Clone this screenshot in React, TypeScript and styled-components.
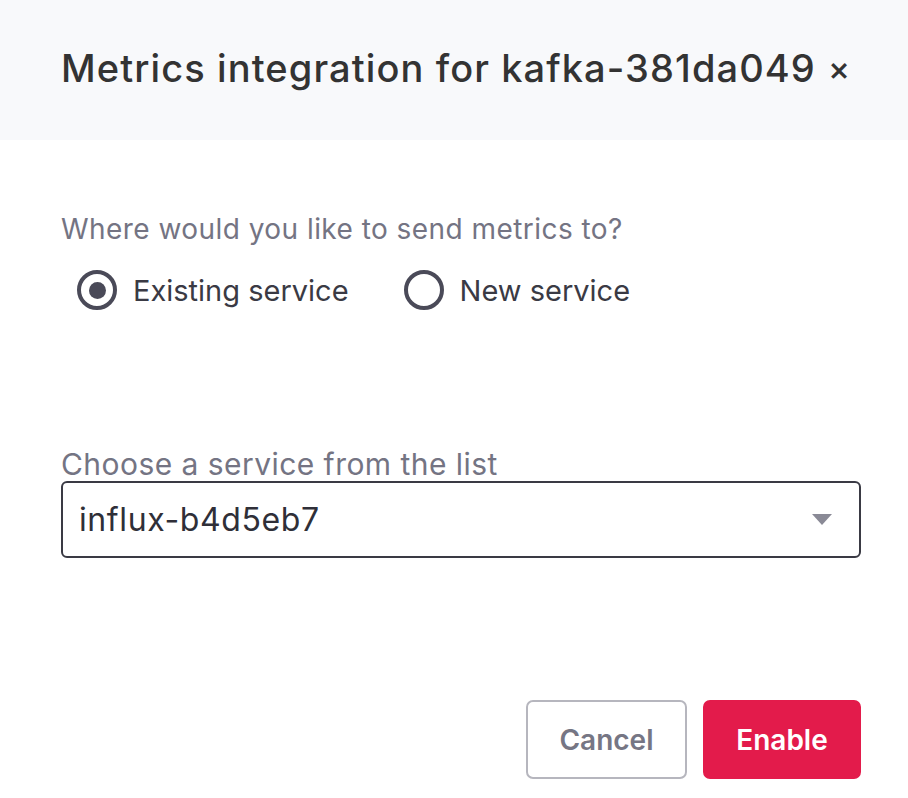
import React from 'react';
import styled, { createGlobalStyle } from 'styled-components';

const GlobalStyle = createGlobalStyle`
  html, body {
    margin: 0;
    padding: 0;
    background: #ffffff;
  }
  body {
    font-family: Inter, "Noto Sans", sans-serif;
    -webkit-font-smoothing: antialiased;
  }
`;

const Modal = styled.div`
  width: 908px;
  height: 798px;
  display: flex;
  flex-direction: column;
  background: #fff;
`;

const Header = styled.div`
  height: 140px;
  flex-shrink: 0;
  background: #f8f9fb;
  display: flex;
  align-items: center;
  padding: 0 0 4px 61px;
  box-sizing: border-box;
`;

const Title = styled.h1`
  margin: 0;
  font-size: 38px;
  font-weight: 500;
  color: #333333;
  letter-spacing: 1.1px;
  white-space: nowrap;
`;

const Close = styled.button`
  border: none;
  background: none;
  padding: 0;
  margin-left: 12px;
  color: #333;
  font-size: 33px;
  font-weight: 500;
  line-height: 1;
  cursor: pointer;
  font-family: inherit;
`;

const Body = styled.div`
  flex: 1;
  display: flex;
  flex-direction: column;
  padding: 72px 47px 19px 61px;
`;

const FieldLabel = styled.div<{ $size?: number }>`
  font-size: ${p => p.$size ?? 28}px;
  letter-spacing: 0.45px;
  color: #747483;
  line-height: 34px;
`;

const RadioRow = styled.div`
  display: flex;
  gap: 55px;
  margin-top: 24px;
  padding-left: 16px;
`;

const RadioOption = styled.label`
  display: flex;
  align-items: center;
  gap: 16px;
  height: 40px;
  font-size: 29px;
  color: #3a3a44;
  cursor: pointer;
`;

const RadioCircle = styled.span<{ $checked: boolean }>`
  width: 40px;
  height: 40px;
  box-sizing: border-box;
  border: 4px solid #4a4a58;
  border-radius: 50%;
  display: flex;
  align-items: center;
  justify-content: center;
  &::after {
    content: '';
    width: 17px;
    height: 17px;
    border-radius: 50%;
    background: #4a4a58;
    display: ${p => (p.$checked ? 'block' : 'none')};
  }
`;

const SelectBlock = styled.div`
  margin-top: 137px;
`;

const SelectBox = styled.div`
  height: 77px;
  box-sizing: border-box;
  border: 2px solid #3a3a44;
  border-radius: 6px;
  display: flex;
  align-items: center;
  justify-content: space-between;
  padding: 0 27px 0 16px;
  font-size: 32px;
  letter-spacing: 0.6px;
  color: #2f2f38;
`;

const Caret = styled.span`
  width: 0;
  height: 0;
  border-left: 10px solid transparent;
  border-right: 10px solid transparent;
  border-top: 11px solid #8a8a96;
`;

const Footer = styled.div`
  margin-top: auto;
  display: flex;
  justify-content: flex-end;
  gap: 16px;
`;

const Button = styled.button<{ $primary?: boolean }>`
  height: 79px;
  width: ${p => (p.$primary ? '158px' : '161px')};
  padding: 0;
  box-sizing: border-box;
  border-radius: 7px;
  font-family: inherit;
  font-size: 28px;
  font-weight: 600;
  cursor: pointer;
  border: 2px solid ${p => (p.$primary ? '#e31b4b' : '#b6b6be')};
  background: ${p => (p.$primary ? '#e31b4b' : '#ffffff')};
  color: ${p => (p.$primary ? '#ffffff' : '#767684')};
`;

const App: React.FC = () => {
  const [choice, setChoice] = React.useState<'existing' | 'new'>('existing');

  return (
    <>
      <GlobalStyle />
      <Modal>
        <Header>
          <Title>Metrics integration for kafka-381da049</Title>
          <Close aria-label="Close">×</Close>
        </Header>
        <Body>
          <FieldLabel>Where would you like to send metrics to?</FieldLabel>
          <RadioRow>
            <RadioOption onClick={() => setChoice('existing')}>
              <RadioCircle $checked={choice === 'existing'} />
              Existing service
            </RadioOption>
            <RadioOption onClick={() => setChoice('new')}>
              <RadioCircle $checked={choice === 'new'} />
              New service
            </RadioOption>
          </RadioRow>
          <SelectBlock>
            <FieldLabel $size={30}>Choose a service from the list</FieldLabel>
            <SelectBox>
              influx-b4d5eb7
              <Caret />
            </SelectBox>
          </SelectBlock>
          <Footer>
            <Button>Cancel</Button>
            <Button $primary>Enable</Button>
          </Footer>
        </Body>
      </Modal>
    </>
  );
};

export default App;
